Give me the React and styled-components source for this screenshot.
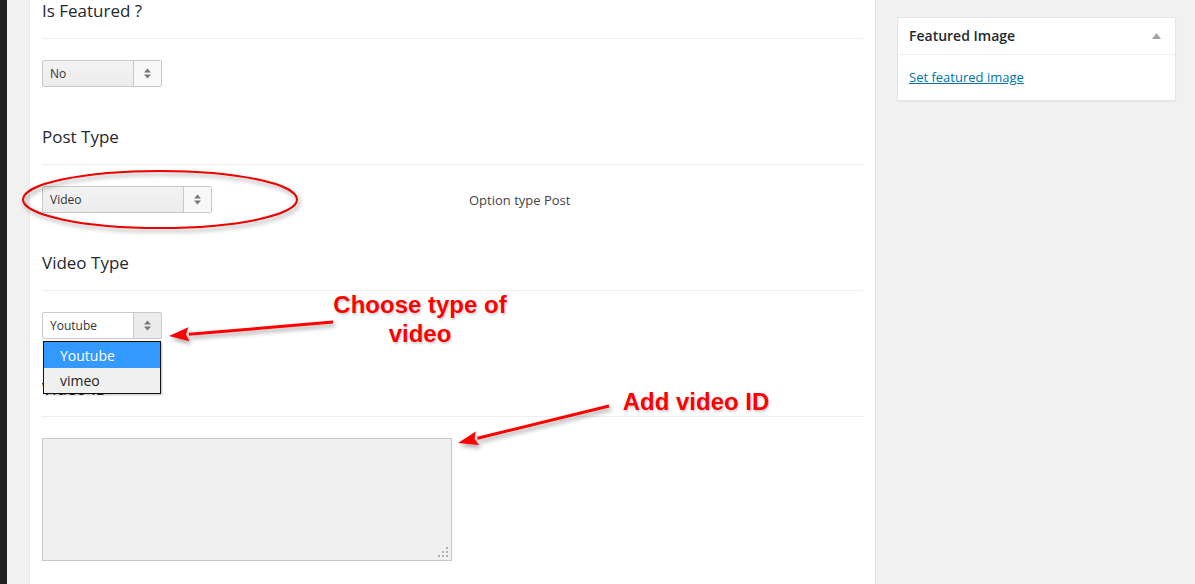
import React from 'react';
import styled, { createGlobalStyle } from 'styled-components';

const GlobalStyle = createGlobalStyle`
  html, body {
    margin: 0;
    padding: 0;
    background: #f1f1f1;
    overflow: hidden;
  }
  * {
    box-sizing: border-box;
  }
`;

const Page = styled.div`
  position: relative;
  display: flex;
  width: 1195px;
  height: 584px;
  font-family: 'Open Sans', 'Liberation Sans', sans-serif;
  color: #23282d;
  background: #f1f1f1;
  overflow: hidden;
`;

const AdminBar = styled.div`
  width: 7px;
  flex: none;
  background: #222;
`;

const Gutter = styled.div`
  width: 23px;
  flex: none;
  background: #f1f1f1;
  border-right: 1px solid #e8e8e8;
`;

const MainPanel = styled.div`
  width: 846px;
  flex: none;
  background: #fff;
  border-right: 1px solid #e2e2e2;
  padding: 0 12px;
`;

const Section = styled.section`
  display: flex;
  flex-direction: column;
`;

const Heading = styled.h3`
  margin: 0;
  font-size: 17px;
  font-weight: 400;
  line-height: 22px;
  padding-bottom: 16px;
  border-bottom: 1px solid #eee;
  color: #23282d;
`;

const Field = styled.div`
  display: grid;
  grid-template-columns: ${props => props.$cols || 'auto'};
  justify-content: start;
  align-items: center;
  padding: 21px 0 39px;
`;

const SelectWrap = styled.div`
  position: relative;
  width: ${props => props.$width}px;
`;

const Select = styled.div`
  display: flex;
  height: 27px;
  border: 1px solid #c9c9c9;
  border-radius: 2px;
  background: ${props => (props.$open ? '#fff' : 'linear-gradient(#f3f3f3, #ececec)')};
  font-size: 12px;
  color: #333;
`;

const SelectValue = styled.div`
  flex: 1;
  display: flex;
  align-items: center;
  padding-left: 7px;
`;

const SelectArrow = styled.div`
  width: 28px;
  flex: none;
  display: flex;
  align-items: center;
  justify-content: center;
  border-left: 1px solid #c9c9c9;
  background: ${props => (props.$open ? '#ececec' : '#f8f8f8')};
`;

const OptionList = styled.ul`
  position: absolute;
  top: 29px;
  left: 1px;
  width: 118px;
  margin: 0;
  padding: 0;
  list-style: none;
  border: 1px solid #111;
  background: #f0f0f0;
  box-shadow: 1px 1px 2px rgba(0, 0, 0, 0.25);
  z-index: 2;
`;

const Option = styled.li`
  height: ${props => (props.$active ? 26 : 25)}px;
  display: flex;
  align-items: center;
  padding-left: 16px;
  font-size: 14px;
  color: ${props => (props.$active ? '#fff' : '#222')};
  background: ${props => (props.$active ? '#3399ff' : '#f0f0f0')};
`;

const Description = styled.span`
  font-size: 13px;
  color: #444;
`;

const TextArea = styled.div`
  position: relative;
  width: 410px;
  height: 123px;
  background: #f0f0f0;
  border: 1px solid #c8c8c8;
`;

const Grip = styled.svg`
  position: absolute;
  right: 2px;
  bottom: 2px;
`;

const Sidebar = styled.aside`
  flex: 1;
  padding: 17px 20px 0 21px;
`;

const MetaBox = styled.div`
  width: 279px;
  background: #fff;
  border: 1px solid #e5e5e5;
  box-shadow: 0 1px 1px rgba(0, 0, 0, 0.04);
`;

const MetaHeader = styled.div`
  display: flex;
  align-items: center;
  justify-content: space-between;
  height: 37px;
  padding: 0 14px 1px 11px;
  border-bottom: 1px solid #eee;
  font-size: 14px;
  font-weight: 600;
  color: #23282d;
`;

const MetaBody = styled.div`
  padding: 13px 11px 13px;
  font-size: 13px;
  line-height: 19px;
`;

const MetaLink = styled.a`
  color: #0073aa;
  text-decoration: underline;
`;

const Overlay = styled.svg`
  position: absolute;
  left: 0;
  top: 0;
  pointer-events: none;
  z-index: 3;
`;

const Note = styled.div`
  position: absolute;
  left: ${props => props.$x}px;
  top: ${props => props.$y}px;
  width: ${props => props.$w}px;
  text-align: center;
  font-family: 'Liberation Sans', Arial, sans-serif;
  font-weight: 700;
  font-size: 24px;
  line-height: 29px;
  color: #f00;
  text-shadow: 1px 2px 2px rgba(0, 0, 0, 0.18);
  pointer-events: none;
  z-index: 3;
`;

const UpDown = () => (
  <svg width="9" height="11" viewBox="0 0 9 11">
    <path d="M4.5 0.5 L8 4.5 H1 Z" fill="#777" />
    <path d="M1 6.5 H8 L4.5 10.5 Z" fill="#777" />
  </svg>
);

const Dropdown = ({ width, value, open, options }) => (
  <SelectWrap $width={width}>
    <Select $open={open}>
      <SelectValue>{value}</SelectValue>
      <SelectArrow $open={open}>
        <UpDown />
      </SelectArrow>
    </Select>
    {open && (
      <OptionList>
        {options.map(o => (
          <Option key={o} $active={o === value}>
            {o}
          </Option>
        ))}
      </OptionList>
    )}
  </SelectWrap>
);

const Arrow = ({ x1, y1, x2, y2 }) => {
  const a = Math.atan2(y2 - y1, x2 - x1);
  const len = 20;
  const half = 7;
  const bx = x2 - len * Math.cos(a);
  const by = y2 - len * Math.sin(a);
  const px = -Math.sin(a) * half;
  const py = Math.cos(a) * half;
  const nx = bx + (x2 - bx) * 0.15;
  const ny = by + (y2 - by) * 0.15;
  return (
    <g filter="url(#shadow)">
      <line x1={x1} y1={y1} x2={bx} y2={by} stroke="#f00" strokeWidth="3" />
      <path d={`M${x2} ${y2} L${bx + px} ${by + py} L${nx} ${ny} L${bx - px} ${by - py} Z`} fill="#f00" />
    </g>
  );
};

export default function App() {
  return (
    <>
      <GlobalStyle />
      <Page>
        <AdminBar />
        <Gutter />
        <MainPanel>
          <Section>
            <Heading>Is Featured ?</Heading>
            <Field>
              <Dropdown width={120} value="No" />
            </Field>
          </Section>
          <Section>
            <Heading>Post Type</Heading>
            <Field $cols="427px auto">
              <Dropdown width={170} value="Video" />
              <Description>Option type Post</Description>
            </Field>
          </Section>
          <Section>
            <Heading>Video Type</Heading>
            <Field>
              <Dropdown width={120} value="Youtube" open options={['Youtube', 'vimeo']} />
            </Field>
          </Section>
          <Section>
            <Heading>Video ID</Heading>
            <Field>
              <TextArea>
                <Grip width="11" height="11" viewBox="0 0 11 11">
                  <g fill="#b0b0b0">
                    <rect x="8" y="0" width="2" height="2" />
                    <rect x="4" y="4" width="2" height="2" />
                    <rect x="8" y="4" width="2" height="2" />
                    <rect x="0" y="8" width="2" height="2" />
                    <rect x="4" y="8" width="2" height="2" />
                    <rect x="8" y="8" width="2" height="2" />
                  </g>
                </Grip>
              </TextArea>
            </Field>
          </Section>
        </MainPanel>
        <Sidebar>
          <MetaBox>
            <MetaHeader>
              Featured Image
              <svg width="9" height="6" viewBox="0 0 9 6">
                <path d="M4.5 0 L9 6 H0 Z" fill="#a0a5aa" />
              </svg>
            </MetaHeader>
            <MetaBody>
              <MetaLink href="#">Set featured image</MetaLink>
            </MetaBody>
          </MetaBox>
        </Sidebar>

        <Overlay width="1195" height="584" viewBox="0 0 1195 584">
          <defs>
            <filter id="shadow" x="-20%" y="-50%" width="140%" height="200%">
              <feDropShadow dx="2" dy="3" stdDeviation="2" floodColor="#000" floodOpacity="0.35" />
            </filter>
          </defs>
          <ellipse cx="160" cy="199.5" rx="137" ry="28.5" fill="none" stroke="#e00" strokeWidth="2" filter="url(#shadow)" />
          <Arrow x1={333} y1={322} x2={169} y2={336} />
          <Arrow x1={609} y1={406} x2={458} y2={443} />
        </Overlay>
        <Note $x={320} $y={290} $w={200}>
          Choose type of
          <br />
          video
        </Note>
        <Note $x={610} $y={387} $w={172}>
          Add video ID
        </Note>
      </Page>
    </>
  );
}
